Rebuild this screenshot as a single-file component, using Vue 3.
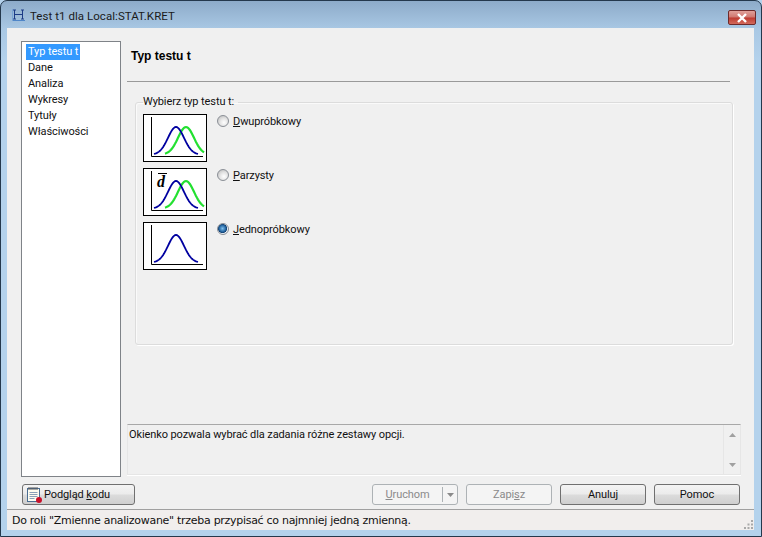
<script setup>
const navItems = ['Typ testu t', 'Dane', 'Analiza', 'Wykresy', 'Tytuły', 'Właściwości']
const options = [
  { key: 'D', post: 'wupróbkowy', green: true, bar: false, on: false },
  { key: 'P', post: 'arzysty', green: true, bar: true, on: false },
  { key: 'J', post: 'ednopróbkowy', green: false, bar: false, on: true }
]
function bell(c, from, to) {
  const pts = []
  for (let x = from; x <= to; x += 1) {
    const y = 40.5 - 27.5 * Math.exp(-((x - c) ** 2) / (2 * 8 * 8))
    pts.push(`${x},${y.toFixed(2)}`)
  }
  return pts.join(' ')
}
const blue = bell(33, 11, 55)
const green = bell(43, 22, 61)
</script>

<template>
  <div class="window">
    <header class="titlebar">
      <svg class="app-icon" width="14" height="13" viewBox="0 0 14 13">
        <path d="M2.500 1v9M1 1h3M1 10h3M2.500 5.500h8M10.500 1v9M9 1h3M9 10h3" fill="none" stroke="#1d3c86" stroke-width="1" />
        <path d="M0 11.500h13" stroke="#4f86c8" stroke-width="1" />
        <path d="M0.500 0v12" stroke="#7aa4d4" stroke-width="1" />
      </svg>
      <span class="title">Test t1 dla Local:STAT.KRET</span>
      <button class="close">
        <svg width="12" height="10" viewBox="0 0 12 10">
          <path d="M2 1l8 8M10 1l-8 8" stroke="#fff" stroke-width="2.4" fill="none" />
        </svg>
      </button>
    </header>

    <div class="client">
      <div class="body">
        <ul class="nav">
          <li v-for="(item, i) in navItems" :key="item"><span :class="{ selected: i === 0 }">{{ item }}</span></li>
        </ul>

        <main class="pane">
          <h1 class="heading">Typ testu t</h1>
          <hr class="rule" />
          <fieldset class="group">
            <legend>Wybierz typ testu t:</legend>
            <div v-for="opt in options" :key="opt.key" class="option">
              <svg class="chart" width="64" height="48" viewBox="0 0 64 48">
                <path d="M8.500 3v39.500H60" fill="none" stroke="#000" stroke-width="1" />
                <polyline v-if="opt.green" :points="green" fill="none" stroke="#22e030" stroke-width="2.200" />
                <polyline :points="blue" fill="none" stroke="#0000a0" stroke-width="1.800" />
                <g v-if="opt.bar">
                  <path d="M15 5.500h9" stroke="#000" stroke-width="1" />
                  <text x="14" y="19" class="d-mark">d</text>
                </g>
              </svg>
              <span class="radio" :class="{ on: opt.on }"></span>
              <span class="opt-label"><u>{{ opt.key }}</u>{{ opt.post }}</span>
            </div>
          </fieldset>

          <div class="desc">
            <p>Okienko pozwala wybrać dla zadania różne zestawy opcji.</p>
            <div class="scroll">
              <svg width="7" height="4" viewBox="0 0 7 4"><path d="M3.500 0L7 4H0z" fill="#a0a0a0" /></svg>
              <svg width="7" height="4" viewBox="0 0 7 4"><path d="M3.500 4L7 0H0z" fill="#a0a0a0" /></svg>
            </div>
          </div>
        </main>
      </div>

      <div class="actions">
        <button class="btn code">
          <svg width="17" height="17" viewBox="0 0 17 17">
            <rect x="1.500" y="2.500" width="12" height="13" fill="#fdfcf0" stroke="#4a6d92" />
            <path d="M3 1v3M5 1v3M7 1v3M9 1v3M11 1v3" stroke="#555" stroke-width="1" />
            <path d="M3.500 6.500h8M3.500 8.500h8M3.500 10.500h8M3.500 12.500h5" stroke="#8aa0b8" stroke-width="1" />
            <circle cx="13" cy="14" r="3" fill="#c8102a" />
          </svg>
          <span>Podgląd <u>k</u>odu</span>
        </button>
        <div class="spacer"></div>
        <button class="btn disabled split">
          <span class="split-main"><u>U</u>ruchom</span>
          <span class="split-arrow"><svg width="7" height="4" viewBox="0 0 7 4"><path d="M0 0h7L3.500 4z" fill="#8a8a8a" /></svg></span>
        </button>
        <button class="btn disabled wide">Zapi<u>s</u>z</button>
        <button class="btn wide">Anuluj</button>
        <button class="btn wide">Pomoc</button>
      </div>

      <footer class="status">
        <span class="status-text">Do roli "Zmienne analizowane" trzeba przypisać co najmniej jedną zmienną.</span>
        <svg class="grip" width="11" height="11" viewBox="0 0 11 11">
          <path d="M8 2h2v2H8zM8 5.500h2v2H8zM8 9h2v2H8zM4.500 5.500h2v2h-2zM4.500 9h2v2h-2zM1 9h2v2H1z" fill="#a9a9a9" />
        </svg>
      </footer>
    </div>
  </div>
</template>

<style>
html, body { margin: 0; padding: 0; background: #b4d2ec; }
</style>

<style scoped>
.window {
  width: 762px;
  height: 537px;
  box-sizing: border-box;
  display: flex;
  flex-direction: column;
  border: 1px solid #24384c;
  border-radius: 7px 7px 0 0;
  padding: 0 7px 6px 6px;
  background: linear-gradient(180deg, #8dabc9 0, #a9c8e4 28px, #b4d2ec 60px);
  font-family: Roboto, "Open Sans", sans-serif;
  font-size: 11px;
  letter-spacing: -0.1px;
  color: #111;
  overflow: hidden;
}
.titlebar {
  height: 27px;
  flex: none;
  display: flex;
  align-items: center;
}
.app-icon { margin: 2px 0 0 5px; }
.title { margin: 2px 0 0 4px; font-size: 11.500px; letter-spacing: 0.050px; color: #1a1a1a; }
.close {
  margin: 6px -2px 0 auto;
  width: 28px;
  height: 15px;
  padding: 0;
  border: 1px solid #6e2a2a;
  border-radius: 2px;
  background: linear-gradient(180deg, #e0a09a 0, #d0776f 48%, #be3a30 52%, #d26a5c 100%);
  display: flex;
  align-items: center;
  justify-content: center;
}
.client {
  flex: 1;
  display: flex;
  flex-direction: column;
  background: #f0f0f0;
  min-height: 0;
}
.body {
  display: flex;
  padding: 13px 13px 0 14px;
  gap: 6px;
}
.nav {
  width: 100px;
  height: 436px;
  box-sizing: border-box;
  margin: 0;
  padding: 2px 0 0 4px;
  list-style: none;
  background: #fff;
  border: 1px solid #7f8388;
}
.nav li { height: 16px; line-height: 16px; }
.nav span { display: inline-block; padding: 0 2px; }
.nav .selected { background: #3399ff; color: #fff; }
.pane {
  width: 614px;
  display: flex;
  flex-direction: column;
}
.heading {
  margin: 7px 0 0 4px;
  height: 16px;
  font-size: 12px;
  line-height: 16px;
  font-weight: 700;
  letter-spacing: 0;
  font-family: "Liberation Sans", sans-serif;
  color: #000;
}
.rule {
  margin: 17px 11px 0 0;
  height: 0;
  border: 0;
  border-top: 1px solid #9a9a9a;
}
.group {
  margin: 12px 8px 0 8px;
  width: 598px;
  height: 251px;
  box-sizing: border-box;
  padding: 0 0 0 7px;
  border: 1px solid #dcdcdc;
  border-radius: 3px;
  box-shadow: 1px 1px 0 #fff, inset 1px 1px 0 #fafafa;
  min-inline-size: 0;
}
legend {
  padding: 0 4px 0 0;
  margin-left: 0;
  line-height: 16px;
}
.option {
  display: flex;
  align-items: flex-start;
  height: 54px;
}
.option:first-of-type { margin-top: 4px; }
.chart {
  flex: none;
  background: #fff;
  outline: 1px solid #000;
  outline-offset: -1px;
}
.d-mark {
  font-family: "Liberation Serif", serif;
  font-style: italic;
  font-weight: 700;
  font-size: 16px;
}
.radio {
  flex: none;
  width: 12px;
  height: 12px;
  margin: 1px 0 0 10px;
  box-sizing: border-box;
  border: 1px solid #8a8f96;
  border-radius: 50%;
  background: radial-gradient(circle at 60% 65%, #fff 0, #e4e4e4 45%, #b5b5b5 100%);
}
.radio.on {
  background: radial-gradient(circle at 45% 45%, #7fc0ee 0, #1f5f9a 45%, #123f70 55%, #e8eef4 62%);
}
.opt-label { margin: 0 0 0 4px; line-height: 16px; }
.desc {
  margin-top: 79px;
  height: 51px;
  display: flex;
  box-sizing: border-box;
  border: 1px solid #e6e6e6;
  border-top-color: #a8a8a8;
  box-shadow: 0 1px 0 #fff;
}
.desc p { flex: 1; margin: 0; padding: 2px 1px; line-height: 16px; }
.scroll {
  width: 17px;
  flex: none;
  border-left: 1px solid #e6e6e6;
  display: flex;
  flex-direction: column;
  align-items: center;
  justify-content: space-between;
  padding: 8px 0 7px;
  box-sizing: border-box;
}
.actions {
  display: flex;
  align-items: center;
  gap: 8px;
  padding: 7px 14px 0 15px;
  height: 28px;
  box-sizing: border-box;
  flex: none;
}
.spacer { flex: 1; }
.btn {
  height: 21px;
  box-sizing: border-box;
  padding: 0;
  border: 1px solid #707070;
  border-radius: 3px;
  background: linear-gradient(180deg, #f4f4f4 0, #ebebeb 48%, #dcdcdc 52%, #cfcfcf 100%);
  font: inherit;
  letter-spacing: inherit;
  color: #111;
  display: flex;
  align-items: center;
  justify-content: center;
}
.btn.wide { width: 86px; }
.btn.code { width: 113px; justify-content: flex-start; padding-left: 3px; gap: 1px; }
.btn.disabled {
  background: #f4f4f4;
  border-color: #adb2b5;
  color: #8a8a8a;
}
.btn.split { width: 86px; }
.split-main { flex: 1; text-align: center; }
.split-arrow {
  width: 14px;
  height: 15px;
  border-left: 1px solid #adb2b5;
  display: flex;
  align-items: center;
  justify-content: center;
}
.status {
  margin-top: 4px;
  flex: 1;
  display: flex;
  align-items: center;
  padding-left: 5px;
  border-top: 1px solid #a0a0a0;
  background: #f1eeed;
  font-family: "DejaVu Sans", sans-serif;
  font-size: 11px;
  letter-spacing: -0.290px;
  color: #111;
}
.status-text { margin-top: 1px; }
.grip { margin-left: auto; margin-top: 6px; }
</style>
